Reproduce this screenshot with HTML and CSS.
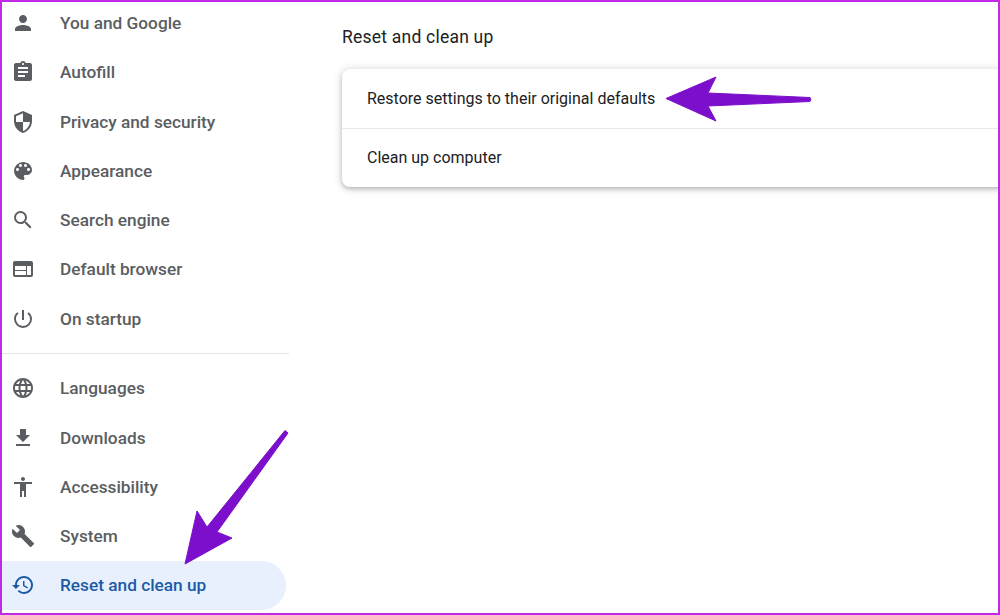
FILE: index.html
```html
<!DOCTYPE html>
<html lang="en">
<head>
    <meta charset="UTF-8">
    <meta name="viewport" content="width=device-width, initial-scale=1.0">
    <title>Settings - Reset and clean up</title>
    <link rel="stylesheet" href="styles.css">
</head>
<body>

<div class="page">
    <nav class="sidebar">
        <a class="nav-item" href="#">
            <svg class="nav-icon" viewBox="0 0 24 24"><path d="M12 12c2.21 0 4-1.79 4-4s-1.79-4-4-4-4 1.79-4 4 1.79 4 4 4zm0 2c-2.67 0-8 1.34-8 4v2h16v-2c0-2.66-5.33-4-8-4z"/></svg>
            <span>You and Google</span>
        </a>
        <a class="nav-item" href="#">
            <svg class="nav-icon" viewBox="0 0 24 24"><path d="M19 3h-4.18C14.4 1.84 13.3 1 12 1c-1.3 0-2.4.84-2.82 2H5c-1.1 0-2 .9-2 2v14c0 1.1.9 2 2 2h14c1.1 0 2-.9 2-2V5c0-1.1-.9-2-2-2zm-7 0c.55 0 1 .45 1 1s-.45 1-1 1-1-.45-1-1 .45-1 1-1zm2 14H7v-2h7v2zm3-4H7v-2h10v2zm0-4H7V7h10v2z"/></svg>
            <span>Autofill</span>
        </a>
        <a class="nav-item" href="#">
            <svg class="nav-icon" viewBox="0 0 24 24"><path d="M12 1L3 5v6c0 5.55 3.84 10.74 9 12 5.16-1.26 9-6.45 9-12V5l-9-4zm0 10.99h7c-.53 4.12-3.28 7.79-7 8.94V12H5V6.3l7-3.11v8.8z"/></svg>
            <span>Privacy and security</span>
        </a>
        <a class="nav-item" href="#">
            <svg class="nav-icon" viewBox="0 0 24 24"><path d="M12 3a9 9 0 0 0 0 18c.83 0 1.5-.67 1.5-1.5 0-.39-.15-.74-.39-1.01-.23-.26-.38-.61-.38-.99 0-.83.67-1.5 1.5-1.5H16c2.76 0 5-2.24 5-5 0-4.42-4.03-8-9-8zm-5.5 9c-.83 0-1.5-.67-1.5-1.5S5.67 9 6.5 9 8 9.67 8 10.5 7.33 12 6.5 12zm3-4C8.67 8 8 7.33 8 6.5S8.67 5 9.5 5s1.5.67 1.5 1.5S10.33 8 9.5 8zm5 0c-.83 0-1.5-.67-1.5-1.5S13.67 5 14.5 5s1.5.67 1.5 1.5S15.33 8 14.5 8zm3 4c-.83 0-1.5-.67-1.5-1.5S16.67 9 17.5 9s1.5.67 1.5 1.5-.67 1.5-1.5 1.5z"/></svg>
            <span>Appearance</span>
        </a>
        <a class="nav-item" href="#">
            <svg class="nav-icon" viewBox="0 0 24 24"><path d="M15.5 14h-.79l-.28-.27A6.471 6.471 0 0 0 16 9.5 6.5 6.5 0 1 0 9.5 16c1.61 0 3.09-.59 4.23-1.57l.27.28v.79l5 4.99L20.49 19l-4.99-5zm-6 0C7.01 14 5 11.99 5 9.5S7.01 5 9.5 5 14 7.01 14 9.5 11.99 14 9.5 14z"/></svg>
            <span>Search engine</span>
        </a>
        <a class="nav-item" href="#">
            <svg class="nav-icon" viewBox="0 0 24 24"><path d="M20 4H4c-1.1 0-1.99.9-1.99 2L2 18c0 1.1.9 2 2 2h16c1.1 0 2-.9 2-2V6c0-1.1-.9-2-2-2zm-5 14H4v-4h11v4zm0-5H4V9h11v4zm5 5h-4V9h4v9z"/></svg>
            <span>Default browser</span>
        </a>
        <a class="nav-item" href="#">
            <svg class="nav-icon" viewBox="0 0 24 24"><path d="M13 3h-2v10h2V3zm4.83 2.17l-1.42 1.42A6.92 6.92 0 0 1 19 12c0 3.87-3.13 7-7 7A6.995 6.995 0 0 1 7.58 6.58L6.17 5.17A8.932 8.932 0 0 0 3 12a9 9 0 0 0 18 0c0-2.74-1.23-5.18-3.17-6.83z"/></svg>
            <span>On startup</span>
        </a>

        <div class="nav-divider"></div>

        <a class="nav-item" href="#">
            <svg class="nav-icon" viewBox="0 0 24 24"><path d="M11.99 2C6.47 2 2 6.48 2 12s4.47 10 9.99 10C17.52 22 22 17.52 22 12S17.52 2 11.99 2zm6.93 6h-2.95a15.65 15.65 0 0 0-1.38-3.56A8.03 8.03 0 0 1 18.92 8zM12 4.04c.83 1.2 1.48 2.53 1.91 3.96h-3.82c.43-1.43 1.08-2.76 1.91-3.96zM4.26 14C4.1 13.36 4 12.69 4 12s.1-1.36.26-2h3.38c-.08.66-.14 1.32-.14 2 0 .68.06 1.34.14 2H4.26zm.82 2h2.95c.32 1.25.78 2.45 1.38 3.56A7.987 7.987 0 0 1 5.08 16zm2.95-8H5.08a7.987 7.987 0 0 1 4.33-3.56A15.65 15.65 0 0 0 8.03 8zM12 19.96c-.83-1.2-1.48-2.53-1.91-3.96h3.82c-.43 1.43-1.08 2.76-1.91 3.96zM14.34 14H9.66c-.09-.66-.16-1.32-.16-2 0-.68.07-1.35.16-2h4.68c.09.65.16 1.32.16 2 0 .68-.07 1.34-.16 2zm.25 5.56c.6-1.11 1.06-2.31 1.38-3.56h2.95a8.03 8.03 0 0 1-4.33 3.56zM16.36 14c.08-.66.14-1.32.14-2 0-.68-.06-1.34-.14-2h3.38c.16.64.26 1.31.26 2s-.1 1.36-.26 2h-3.38z"/></svg>
            <span>Languages</span>
        </a>
        <a class="nav-item" href="#">
            <svg class="nav-icon" viewBox="0 0 24 24"><path d="M19 9h-4V3H9v6H5l7 7 7-7zM5 18v2h14v-2H5z"/></svg>
            <span>Downloads</span>
        </a>
        <a class="nav-item" href="#">
            <svg class="nav-icon" viewBox="0 0 24 24"><path d="M12 2c1.1 0 2 .9 2 2s-.9 2-2 2-2-.9-2-2 .9-2 2-2zm9 7h-6v13h-2v-6h-2v6H9V9H3V7h18v2z"/></svg>
            <span>Accessibility</span>
        </a>
        <a class="nav-item" href="#">
            <svg class="nav-icon" viewBox="0 0 24 24"><path d="M22.7 19l-9.1-9.1c.9-2.3.4-5-1.5-6.9-2-2-5-2.4-7.4-1.3L9 6 6 9 1.6 4.7C.4 7.1.9 10.1 2.9 12.1c1.9 1.9 4.6 2.4 6.9 1.5l9.1 9.1c.4.4 1 .4 1.4 0l2.3-2.3c.5-.4.5-1.1.1-1.4z"/></svg>
            <span>System</span>
        </a>
        <a class="nav-item active" href="#">
            <svg class="nav-icon" viewBox="0 0 24 24"><path d="M13 3c-4.97 0-9 4.03-9 9H1l3.89 3.89.07.14L9 12H6c0-3.87 3.13-7 7-7s7 3.13 7 7-3.13 7-7 7c-1.93 0-3.68-.79-4.94-2.06l-1.42 1.42A8.954 8.954 0 0 0 13 21c4.97 0 9-4.03 9-9s-4.03-9-9-9zm-1 5v5l4.28 2.54.72-1.21-3.5-2.08V8H12z"/></svg>
            <span>Reset and clean up</span>
        </a>
    </nav>

    <main class="content">
        <h2 class="section-title">Reset and clean up</h2>
        <div class="card">
            <div class="card-row">Restore settings to their original defaults</div>
            <div class="card-row">Clean up computer</div>
        </div>
    </main>
</div>

<!-- annotation arrows drawn on top of the screenshot -->
<svg class="arrows" viewBox="0 0 1000 615">
    <path d="M666 98.5L716 77L708 93L810 97.5Q811.500 99.500 810 101.500L708 106L716 121Z"/>
    <path d="M288 433L285 430.500L207 527L197 511L185 564L232 538L217 532Z"/>
</svg>
<div class="frame"></div>

</body>
</html>
```

FILE: styles.css
```css
* {
    box-sizing: border-box;
}
html, body {
    height: 100%;
}
body {
    margin: 0;
    background: #fff;
    font-family: Roboto, "Liberation Sans", sans-serif;
    overflow: hidden;
}
.page {
    display: flex;
    height: 615px;
}

/* sidebar */
.sidebar {
    display: flex;
    flex-direction: column;
    flex: 0 0 342px;
    margin-top: -1.4px;
    padding-left: 2px;
}
.nav-item {
    display: flex;
    align-items: center;
    gap: 25px;
    flex: none;
    width: 284px;
    height: 49.25px;
    padding-left: 9px;
    border-radius: 0 25px 25px 0;
    color: #5a5d61;
    font-size: 17.25px;
    font-weight: 500;
    text-decoration: none;
}
.nav-item.active {
    background: #e8f0fe;
    color: #1c5ba6;
}
.nav-icon {
    flex: none;
    width: 24px;
    height: 24px;
    fill: currentColor;
}
.nav-divider {
    flex: none;
    width: 287px;
    height: 1px;
    margin: 9.5px 0 10px;
    background: #e6e6e8;
}

/* main column */
.content {
    flex: 1;
    padding-top: 27px;
}
.section-title {
    margin: 0 0 21px;
    color: #202124;
    font-size: 17.5px;
    font-weight: 400;
    letter-spacing: 0.22px;
    line-height: 21px;
}
.card {
    height: 118px;
    border-radius: 8px 0 0 8px;
    background: #fff;
    box-shadow: 0 2px 4px rgba(60, 64, 67, 0.3), 0 1px 8px 2px rgba(60, 64, 67, 0.12);
}
.card-row {
    display: flex;
    align-items: center;
    height: 59px;
    padding-left: 25px;
    color: #202124;
    font-size: 16px;
}
.card-row + .card-row {
    padding-bottom: 2px;
    border-top: 1px solid #e8e8e8;
}

/* overlays */
.arrows {
    position: absolute;
    left: 0;
    top: 0;
    width: 1000px;
    height: 615px;
    fill: #7c0fcb;
    stroke: #7c0fcb;
    stroke-width: 1;
    stroke-linejoin: round;
}
.frame {
    position: absolute;
    left: 0;
    top: 0;
    width: 1000px;
    height: 615px;
    border: 2px solid #c02ae6;
}
```
